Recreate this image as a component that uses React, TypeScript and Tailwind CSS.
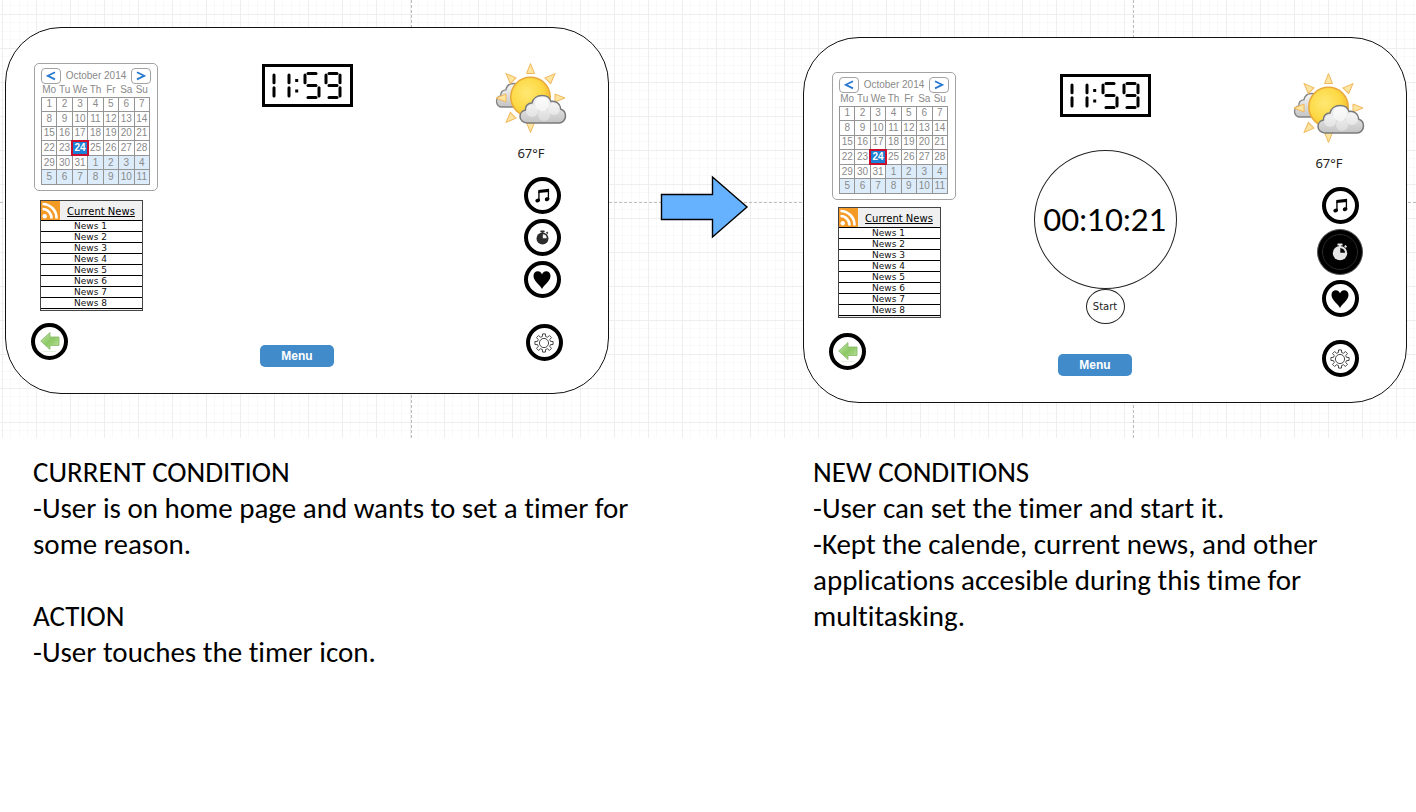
import React from "react";

const WEEKDAYS = ["Mo", "Tu", "We", "Th", "Fr", "Sa", "Su"];

const WEEKS: number[][] = [
  [1, 2, 3, 4, 5, 6, 7],
  [8, 9, 10, 11, 12, 13, 14],
  [15, 16, 17, 18, 19, 20, 21],
  [22, 23, 24, 25, 26, 27, 28],
  [29, 30, 31, 1, 2, 3, 4],
  [5, 6, 7, 8, 9, 10, 11],
];

const NEWS = ["News 1", "News 2", "News 3", "News 4", "News 5", "News 6", "News 7", "News 8"];

function dayClass(week: number, day: number) {
  if (week === 3 && day === 24) return "bg-[#1c7fd6] font-bold text-white outline-2 -outline-offset-1 outline-[#c8102e]";
  if (week > 3 && day < 29) return "bg-[#dcecfa]";
  return "";
}

function Calendar() {
  return (
    <div className="h-32 w-[124px] rounded-[5px] border border-[#a3a3a3] bg-white px-[6px] pt-1 font-['Liberation_Sans',Arial,sans-serif] text-[10px] leading-3 text-[#8a8a8a]">
      <div className="flex items-center justify-between">
        <button aria-label="Previous month" className="flex h-4 w-5 items-center justify-center rounded-[4px] border border-[#a3a3a3]">
          <svg width="10" height="10" viewBox="0 0 10 10" fill="none" stroke="#2478cf" strokeWidth="1.8"><path d="M9 1.2 1.8 4.8 9 8.4" /></svg>
        </button>
        <span className="whitespace-nowrap">October 2014</span>
        <button aria-label="Next month" className="flex h-4 w-5 items-center justify-center rounded-[4px] border border-[#a3a3a3]">
          <svg width="10" height="10" viewBox="0 0 10 10" fill="none" stroke="#2478cf" strokeWidth="1.8"><path d="M1 1.2 8.2 4.8 1 8.4" /></svg>
        </button>
      </div>
      <table className="h-[101px] w-[109px] table-fixed border-collapse">
        <thead>
          <tr>
            {WEEKDAYS.map((d) => (
              <th key={d} className="h-[13px] p-0 font-normal"><span className="flex justify-center">{d}</span></th>
            ))}
          </tr>
        </thead>
        <tbody>
          {WEEKS.map((week, w) => (
            <tr key={w}>
              {week.map((day) => (
                <td key={day} className={`border border-[#959595] p-0 text-center ${dayClass(w, day)}`}>
                  <span className="flex justify-center">{day}</span>
                </td>
              ))}
            </tr>
          ))}
        </tbody>
      </table>
    </div>
  );
}

function NewsList() {
  return (
    <section className="ml-[6px] w-[103px] border border-[#444] bg-[#f0f0f0] pb-px font-['DejaVu_Sans',Verdana,sans-serif] text-[9px] leading-[10px] text-[#111]">
      <div className="flex h-[19px]">
        <svg width="19" height="19" viewBox="0 0 19 19" className="shrink-0">
          <rect width="19" height="19" fill="#f39a27" />
          <g fill="none" stroke="#fff" strokeWidth="2.6">
            <path d="M1.5 3A14 14 0 0 1 15.5 17.5" />
            <path d="M1.5 8A9 9 0 0 1 10.5 17.5" />
          </g>
          <circle cx="3.7" cy="15.3" r="2.2" fill="#fff" />
        </svg>
        <h2 className="flex-1 whitespace-nowrap pt-[6px] text-center font-['Comic_Sans_MS','DejaVu_Sans',sans-serif] text-[10px] leading-[10px] text-black underline">
          Current News
        </h2>
      </div>
      <ul className="border-b border-black bg-white">
        {NEWS.map((n) => (
          <li key={n} className="border-t border-black pr-[2px] text-center">{n}</li>
        ))}
      </ul>
    </section>
  );
}

const SEGMENTS: Record<string, string> = {
  a: "M3 0H11",
  b: "M14 1.5V9.3",
  c: "M14 14.2V22.5",
  d: "M3 24H11",
  e: "M0 14.2V22.5",
  f: "M0 1.5V9.3",
  g: "M3 12H11",
};

function Digit({ x, on }: { x: number; on: string }) {
  return (
    <g transform={`translate(${x} 6.5)`}>
      {on.split("").map((s) => (
        <path key={s} d={SEGMENTS[s]} />
      ))}
    </g>
  );
}

function Clock() {
  return (
    <div role="img" aria-label="11:59" className="h-[43px] w-[91px] border-3 border-black bg-white">
      <svg width="85" height="37" viewBox="0 0 85 37" fill="none" stroke="#000" strokeWidth="3" strokeLinecap="round">
        <Digit x={-5} on="bc" />
        <Digit x={10} on="bc" />
        <rect x="30.2" y="12" width="3" height="3" fill="#000" stroke="none" />
        <rect x="30.2" y="22.5" width="3" height="3" fill="#000" stroke="none" />
        <Digit x={40} on="afgcd" />
        <Digit x={61} on="abfgcd" />
      </svg>
    </div>
  );
}

const CLOUD = "M7 28C3 28 0 25 0 21.5C0 18 2.5 15.5 5.5 15C5 11 8 8 12 8C13 3.5 17 0.5 22 0.5C27 0.5 30 3 31 6.5C36 5.5 40.5 9 40.5 14C43.5 15 45.5 18 45.5 21C45.5 25 42.5 28 39 28Z";

function Weather({ id }: { id: string }) {
  return (
    <svg width="72" height="72" viewBox="0 0 72 72" role="img" aria-label="Partly cloudy">
      <defs>
        <radialGradient id={`${id}-sun`} cx="0.4" cy="0.4" r="0.65">
          <stop offset="0" stopColor="#ffe873" />
          <stop offset="0.65" stopColor="#fcd843" />
          <stop offset="1" stopColor="#f3b72c" />
        </radialGradient>
        <linearGradient id={`${id}-cloud`} x1="0" y1="0" x2="0" y2="1">
          <stop offset="0" stopColor="#f8f8f8" />
          <stop offset="1" stopColor="#c4c4c4" />
        </linearGradient>
      </defs>
      <path d={CLOUD} transform="translate(1.5 21) scale(0.78 0.86)" fill={`url(#${id}-cloud)`} stroke="#838383" strokeWidth="1.7" />
      <g fill="#fde5a0" stroke="#f1b85d" strokeWidth="1">
        {[0, 45, 90, 180, 225, 270, 315].map((a) => (
          <path key={a} d="M31.5 11.5 35.5 1.5 39.5 11.5Z" transform={`rotate(${a} 35.5 36)`} />
        ))}
      </g>
      <circle cx="35.5" cy="35" r="19.7" fill={`url(#${id}-sun)`} stroke="#e9a93a" strokeWidth="1.5" />
      <g transform="translate(25 33)">
        <path d={CLOUD} fill={`url(#${id}-cloud)`} stroke="#797979" strokeWidth="1.5" />
        <circle cx="22" cy="9" r="7" fill="#fff" opacity="0.65" />
        <circle cx="12" cy="16" r="6" fill="#fff" opacity="0.4" />
        <circle cx="34" cy="14" r="6" fill="#fff" opacity="0.45" />
        <circle cx="24" cy="20" r="6" fill="#fff" opacity="0.35" />
      </g>
    </svg>
  );
}

function MusicIcon() {
  return (
    <svg width="15" height="15" viewBox="0 0 16 16">
      <path d="M3.5 2 15 0.8V4.2L3.5 5.4Z" />
      <path d="M4.2 4V13.2M14.3 3V11.7" stroke="#000" strokeWidth="1.4" />
      <ellipse cx="2.9" cy="13.4" rx="2.5" ry="2" transform="rotate(-18 2.9 13.4)" />
      <ellipse cx="12.9" cy="11.9" rx="2.5" ry="2" transform="rotate(-18 12.9 11.9)" />
    </svg>
  );
}

function StopwatchIcon({ active }: { active: boolean }) {
  const fg = active ? "#e6e6e6" : "#2c2c2c";
  const bg = active ? "#050505" : "#f4f4f4";
  return (
    <svg width={active ? 18 : 15} height={active ? 18 : 15} viewBox="0 0 14 16" fill={fg}>
      <rect x="4.7" y="0.5" width="4.6" height="1.8" rx="0.5" />
      <rect x="6.2" y="1.5" width="1.6" height="2.5" />
      <rect x="11" y="2.2" width="2" height="1.7" transform="rotate(45 12 3)" />
      <circle cx="7" cy="9" r="6.4" />
      <path d="M7.3 8.7V4.5A4.3 4.3 0 0 1 11.5 8.7Z" fill={bg} />
    </svg>
  );
}

function HeartIcon() {
  return (
    <svg width="18" height="18" viewBox="0 0 18 18">
      <path d="M9 18C7.8 14.5 0.5 10.5 0.5 5C0.5 2 2.3 0.2 4.8 0.2C7 0.2 8.5 1.7 9 3.5C9.5 1.7 11 0.2 13.2 0.2C15.7 0.2 17.5 2 17.5 5C17.5 10.5 10.2 14.5 9 18Z" />
    </svg>
  );
}

// Outline of an eight-toothed cog centred on the origin.
const GEAR_PATH = (() => {
  const points: string[] = [];
  for (let i = 0; i < 8; i++) {
    const steps: [number, number][] = [[-14, 6.7], [-9, 9.2], [9, 9.2], [14, 6.7]];
    for (const [offset, r] of steps) {
      const a = ((i * 45 + offset) * Math.PI) / 180;
      points.push(`${(Math.sin(a) * r).toFixed(2)} ${(-Math.cos(a) * r).toFixed(2)}`);
    }
  }
  return `M${points.join("L")}Z`;
})();

function GearIcon() {
  return (
    <svg width="20" height="20" viewBox="-10 -10 20 20" fill="none" stroke="#333" strokeWidth="0.9" strokeLinejoin="round">
      <path d={GEAR_PATH} />
      <circle r="4.6" />
    </svg>
  );
}

function BackIcon() {
  return (
    <svg width="20" height="22" viewBox="0 0 20 22">
      <defs>
        <linearGradient id="back-fill" x1="0" y1="0" x2="1" y2="1">
          <stop offset="0" stopColor="#c9e6b4" />
          <stop offset="0.5" stopColor="#8cc963" />
          <stop offset="1" stopColor="#c0e2a4" />
        </linearGradient>
      </defs>
      <path d="M0.7 10 10 1.5V6H19V14.5H10V18.5Z" fill="url(#back-fill)" stroke="#86b865" strokeWidth="0.8" />
      <path d="M3 20.5H16" stroke="#e4f1da" strokeWidth="1" />
    </svg>
  );
}

function RoundButton({ label, children }: { label: string; children: React.ReactNode }) {
  return (
    <button aria-label={label} className="flex size-[37px] shrink-0 items-center justify-center rounded-full border-4 border-black bg-white">
      {children}
    </button>
  );
}

function Device({ id, timer }: { id: string; timer: boolean }) {
  return (
    <article className={`grid min-w-0 flex-1 grid-cols-[158px_1fr_158px] rounded-[56px] border border-[#111] bg-white ${timer ? "mt-[37px]" : "mt-[27px]"}`}>
      <div className={`flex flex-col items-start pl-[25px] ${timer ? "pb-8 pt-[34px]" : "pb-[33px] pt-[35px]"}`}>
        <div className="pl-[3px]">
          <Calendar />
          <div className={timer ? "pt-[7px]" : "pt-[9px]"}>
            <NewsList />
          </div>
        </div>
        <div className={timer ? "pt-[15px]" : "pt-3"}>
          <RoundButton label="Back"><BackIcon /></RoundButton>
        </div>
      </div>

      <div className="flex flex-col items-center pb-[26px] pt-9">
        <Clock />
        {timer && (
          <div className="flex flex-col items-center pt-[33px]">
            <output className="flex h-[139px] w-[143px] items-center justify-center rounded-[50%] border border-[#222] font-['Comic_Sans_MS',Lato,sans-serif] text-[31px] text-black">
              00:10:21
            </output>
            <button className="h-[35px] w-[39px] rounded-[50%] border border-[#222] text-center font-['Comic_Sans_MS','DejaVu_Sans',sans-serif] text-[10px] text-[#222]">
              Start
            </button>
          </div>
        )}
        <button className="mr-5 mt-auto h-[22px] w-[74px] rounded-[5px] bg-[#428bca] font-['Liberation_Sans',Arial,sans-serif] text-[12px] font-bold leading-[22px] text-white">
          Menu
        </button>
      </div>

      <div className="flex flex-col items-center pl-1 pt-[34px]">
        <Weather id={id} />
        <p className="pt-[9px] font-['Noto_Sans',sans-serif] text-[13px] leading-5 text-[#222]">67°F</p>
        <div className="flex flex-col items-center gap-[5px] pl-[22px] pt-[14px]">
          <RoundButton label="Music"><MusicIcon /></RoundButton>
          {timer ? (
            <button aria-label="Timer" aria-pressed="true" className="flex size-[46px] items-center justify-center rounded-full border border-[#555] bg-black">
              <span className="flex size-9 items-center justify-center rounded-full border border-[#2a2a2a]"><StopwatchIcon active /></span>
            </button>
          ) : (
            <RoundButton label="Timer"><StopwatchIcon active={false} /></RoundButton>
          )}
          <RoundButton label="Favorites"><HeartIcon /></RoundButton>
          <div className={timer ? "pt-[18px]" : "pl-1 pt-[21px]"}>
            <RoundButton label="Settings"><GearIcon /></RoundButton>
          </div>
        </div>
      </div>
    </article>
  );
}

export default function App() {
  return (
    <main className="min-h-screen bg-white">
      <section className="relative bg-white bg-[linear-gradient(to_right,#eeeeee_1px,transparent_1px),linear-gradient(to_bottom,#eeeeee_1px,transparent_1px),linear-gradient(to_right,transparent_8px,#f9f9f9_8px,#f9f9f9_9px,transparent_9px,transparent_17px,#f9f9f9_17px,#f9f9f9_18px,transparent_18px,transparent_25px,#f9f9f9_25px,#f9f9f9_26px,transparent_26px),linear-gradient(to_bottom,transparent_8px,#f9f9f9_8px,#f9f9f9_9px,transparent_9px,transparent_17px,#f9f9f9_17px,#f9f9f9_18px,transparent_18px,transparent_25px,#f9f9f9_25px,#f9f9f9_26px,transparent_26px)] bg-[length:34px_34px] bg-[position:2px_14px]">
        <div aria-hidden="true" className="absolute inset-y-0 left-[29%] border-l border-dashed border-[#bdbdbd]" />
        <div aria-hidden="true" className="absolute inset-y-0 left-[80%] border-l border-dashed border-[#bdbdbd]" />
        <div aria-hidden="true" className="absolute inset-x-0 top-[202px] border-t border-dashed border-[#bdbdbd]" />
        <div className="relative flex items-start pb-[35px] pl-[5px] pr-[9px]">
          <Device id="before" timer={false} />
          <div className="w-[194px] shrink-0 pl-[51px] pt-[175px]">
            <svg width="90" height="64" viewBox="0 0 90 64" role="img" aria-label="leads to">
              <path d="M1.500 19.500H52.500V2L87 32 52.500 62V44.500H1.500Z" fill="#66b2ff" stroke="#000" strokeWidth="1.400" />
            </svg>
          </div>
          <Device id="after" timer />
        </div>
      </section>

      <section className="grid grid-cols-[780fr_603fr] pl-[33px] pt-4 font-[Carlito,'Noto_Sans',sans-serif] text-[29px] leading-9 text-black [font-variant-ligatures:none]">
        <div className="max-w-[640px]">
          <h2>CURRENT CONDITION</h2>
          <p>-User is on home page and wants to set a timer for<br />some reason.</p>
          <h2 className="pt-9">ACTION</h2>
          <p>-User touches the timer icon.</p>
        </div>
        <div className="max-w-[560px]">
          <h2>NEW CONDITIONS</h2>
          <p>-User can set the timer and start it.</p>
          <p>-Kept the calende, current news, and other<br />applications accesible during this time for<br />multitasking.</p>
        </div>
      </section>
    </main>
  );
}
